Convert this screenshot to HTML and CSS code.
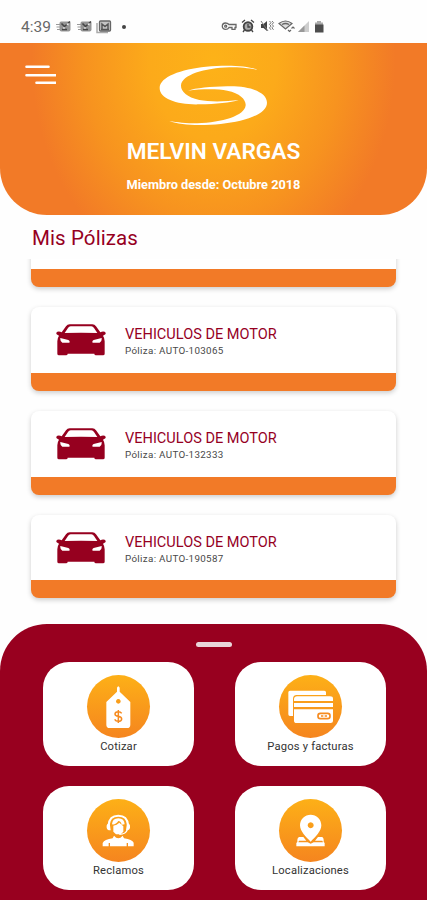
FILE: index.html
```html
<!DOCTYPE html>
<html lang="es">
<head>
<meta charset="utf-8">
<title>Mis Pólizas</title>
<link rel="stylesheet" href="styles.css">
</head>
<body>
<svg class="defs" width="0" height="0" aria-hidden="true">
  <symbol id="car" viewBox="0 0 148 96">
    <path fill-rule="evenodd" d="M40 1H108Q115 1 119 7L132 25Q138 21 145 23Q150 26 147 31Q144 34 140 35Q145 42 145 52V89Q145 94 140 94H119Q114 94 114 89H34Q34 94 29 94H8Q3 94 3 89V52Q3 42 8 35Q4 34 1 31Q-2 26 3 23Q10 21 16 25L29 7Q33 1 40 1ZM43 7Q38 7 35 12L25 27Q74 25 123 27L113 12Q110 7 105 7ZM12 42Q11 54 18 56H39Q42 51 36 48ZM136 42Q137 54 130 56H109Q106 51 112 48Z"/>
  </symbol>
  <symbol id="mail" viewBox="0 0 15 13">
    <path d="M5 1.500h8q1.500 0 1.500 2v6q0 2-2 2H5.500q-2 0-2-2v-6q0-2 1.500-2z" fill="#959595"/>
    <path d="M5.500 3.500l3 3L14 1.500M6 9.500h5" fill="none" stroke="#444" stroke-width="1.500"/>
    <path d="M0 4.500h4M.5 7h4M1 9.500h3" stroke="#999" stroke-width="1.200"/>
    <path d="M10 4l2.500-1v2.500zM7 7.500h2v1H7z" fill="#fff"/>
  </symbol>
</svg>

<div class="status">
  <div class="status-left">
    <span class="clock">4:39</span>
    <svg class="mail" width="15" height="13"><use href="#mail"/></svg>
    <svg class="mail second" width="15" height="13"><use href="#mail"/></svg>
    <svg class="news" width="16" height="14" viewBox="0 0 16 14">
      <path d="M1 3v9.500h11" fill="none" stroke="#aaa" stroke-width="1.500"/>
      <rect x="3.500" y="1" width="11" height="10" rx="1" fill="#c4c4c4" stroke="#666" stroke-width="1.300"/>
      <path d="M6 9V4l3 2.500L12 4v5M5 9.500h8" fill="none" stroke="#555" stroke-width="1.500"/>
    </svg>
    <i class="dot"></i>
  </div>
  <svg class="status-right" width="106" height="16" viewBox="0 0 106 16">
    <g fill="none" stroke="#666" stroke-width="1.300">
      <path d="M8 6.500Q6.500 5 4.500 5a3.200 3.200 0 0 0 0 6.400Q7 11.400 8 9.500h3v1.800h3V9.500h1V6.500z"/>
      <circle cx="4.700" cy="8.200" r="1"/>
    </g>
    <circle cx="27" cy="8.500" r="4.300" fill="#aaa" stroke="#444" stroke-width="1.900"/>
    <path d="M21 4.500l3-2.500M33 4.500L30 2M27 6v3h2.500M23.500 12L22 14M30.500 12l1.500 2" fill="none" stroke="#444" stroke-width="1.300"/>
    <path d="M40 6h2.500L46 3v10l-3.500-3H40z" fill="#444"/>
    <path d="M40 3l7 10M48.500 3l1.500 1.700-1.500 1.700 1.500 1.700-1.500 1.700 1.500 2M51 3l1.500 1.700L51 6.400l1.500 1.700L51 9.800l1.500 2" fill="none" stroke="#777"/>
    <path d="M58 5.500Q64.500 .500 71 5.500L64.500 11z" fill="#ddd" stroke="#666" stroke-width="1.200"/>
    <path d="M61 6.500q3.500-2 7 0" fill="none" stroke="#666" stroke-width="1.300"/>
    <path d="M67 12l1.500 1.500L70 12M70.500 10.500L72 9l1.500 1.500" fill="none" stroke="#666" stroke-width="1.200"/>
    <path d="M77 14L88 3V14z" fill="#cdcdcd"/><path d="M77 14L83.500 7.500V14z" fill="#999"/>
    <path d="M96 3h4v1.500h2V7h-8V4.500h2z" fill="#aaa"/><path d="M94 6.500h8.500v8H94z" fill="#4d4d4d"/>
  </svg>
</div>

<header class="hero">
  <svg class="menu" width="32" height="21" viewBox="0 0 32 21">
    <path d="M2.500 1.800H24.500M2.500 10.200H31.500M12.500 17.800H31.500" stroke="#fff" stroke-width="2.600" stroke-linecap="round"/>
  </svg>
  <svg class="logo" width="109" height="62" viewBox="149 40 327 186" fill="#fff">
    <path id="swoosh" d="M444 57C410 43 345 43 290 48C215 56 151 78 151 112C151 145 205 163 270 161C320 160 365 156 388 148C350 153 300 154 270 148C232 140 214 122 215 104C218 72 285 53 360 50C395 50 420 53 444 57Z"/>
    <use href="#swoosh" transform="rotate(180 312 134)"/>
  </svg>
  <h1 class="name">MELVIN VARGAS</h1>
  <p class="since">Miembro desde: Octubre 2018</p>
</header>

<main>
  <h2 class="heading">Mis Pólizas</h2>
  <div class="list">
    <article class="card"></article>
    <article class="card">
      <svg class="car" width="50" height="32"><use href="#car"/></svg>
      <div><h3>VEHICULOS DE MOTOR</h3><p>Póliza: AUTO-103065</p></div>
    </article>
    <article class="card">
      <svg class="car" width="50" height="32"><use href="#car"/></svg>
      <div><h3>VEHICULOS DE MOTOR</h3><p>Póliza: AUTO-132333</p></div>
    </article>
    <article class="card">
      <svg class="car" width="50" height="32"><use href="#car"/></svg>
      <div><h3>VEHICULOS DE MOTOR</h3><p>Póliza: AUTO-190587</p></div>
    </article>
  </div>
</main>

<section class="panel">
  <div class="handle"></div>
  <div class="tiles">
    <a class="tile">
      <svg class="icon" viewBox="0 0 189 189">
        <path fill="#fff" fill-rule="evenodd" d="M90 50V38Q94 29 98 38V50L130 81V149Q130 159 120 159H68Q58 159 58 149V81ZM94 72a7 7 0 1 0 .1 0Z"/>
        <path d="M104 115Q101 110 94 110Q84 110 84 117Q84 123 94 124Q104 126 104 132Q104 139 94 139Q86 139 83 133M94 105V144" fill="none" stroke="#f68b20" stroke-width="4.500"/>
      </svg>
      <span>Cotizar</span>
    </a>
    <a class="tile">
      <svg class="icon" viewBox="0 0 189 189">
        <path fill="#fff" d="M33 47H136Q141 47 141 52V60H53Q42 60 42 72V123H33Q28 123 28 118V52Q28 47 33 47Z"/>
        <path fill="#fff" d="M54 64H153Q162 64 162 71V78H45V72Q46 64 54 64ZM45 84H162V96H45ZM45 103H162V138Q162 144 155 144H53Q45 144 45 137Z"/>
        <rect x="117" y="115" width="36" height="16" rx="7" fill="none" stroke="#f68b20" stroke-width="5"/>
        <path d="M126 123h18" stroke="#f68b20" stroke-width="4" stroke-dasharray="7 4"/>
      </svg>
      <span>Pagos y facturas</span>
    </a>
    <a class="tile">
      <svg class="icon" viewBox="0 0 189 189">
        <path d="M65 88V78Q67 50 94 50Q121 50 123 78V88" fill="none" stroke="#fff" stroke-width="6"/>
        <path d="M68 72Q57 74 59 86Q61 95 71 94ZM120 72Q131 74 129 86Q127 95 117 94ZM75 76Q76 58 94 58Q112 58 113 76L104 77Q102 66 94 66Q86 78 75 76ZM79 80Q90 78 97 71L109 82V98L101 106H87L79 98Z" fill="#fff"/>
        <path d="M121 92Q117 106 97 106" fill="none" stroke="#fff" stroke-width="4"/>
        <path d="M81 110Q94 125 107 110L111 118Q136 122 140 131V142H123V132H119V142H69V132H65V142H47V132Q52 121 77 118Z" fill="#fff"/>
      </svg>
      <span>Reclamos</span>
    </a>
    <a class="tile">
      <svg class="icon" viewBox="0 0 189 189">
        <path d="M61 114H73L82 125H60L58 130H86L95 134L104 130H132L130 125H108L117 114H129Q135 116 134 129L137 132V142H52V132L55 129Q54 116 61 114Z" fill="#fff"/>
        <path fill="#fff" fill-rule="evenodd" d="M95 47C112 47 127 60 127 79C127 97 109 114 95 128C81 114 63 97 63 79C63 60 78 47 95 47ZM95 70a9 9 0 1 0 .1 0Z"/>
      </svg>
      <span>Localizaciones</span>
    </a>
  </div>
</section>
</body>
</html>
```
FILE: styles.css
```css
* { box-sizing: border-box; }
h1, h2, h3, p { margin: 0; font-weight: 400; }
svg { display: block; flex: none; }
body {
  margin: 0;
  width: 427px;
  height: 900px;
  overflow: hidden;
  background: #fefefe;
  font-family: Roboto, "Liberation Sans", sans-serif;
}
.defs { position: absolute; }

.status {
  height: 43px;
  display: flex;
  justify-content: space-between;
  padding: 18px 100px 0 21px;
}
.status-left { display: flex; height: 17px; align-items: center; }
.clock { width: 35px; padding-top: 1px; font-size: 15.500px; line-height: 17px; color: #686868; }
.second { margin-left: 6px; }
.news { margin-left: 4px; }
.dot { width: 4px; height: 4px; margin-left: 10px; border-radius: 50%; background: #444; }

.hero {
  position: relative;
  height: 171.500px;
  display: flex;
  flex-direction: column;
  align-items: center;
  padding-top: 21px;
  color: #fff;
  background: radial-gradient(ellipse 182px 225px at 50% 10%, #fdb218 0, #fcaa1a 35%, #f7931f 70%, #f27a27 100%);
  border-radius: 0 0 47px 47px;
}
.menu { position: absolute; left: 24px; top: 22px; }
.name { margin-top: 13px; font-size: 22.700px; line-height: 26px; font-weight: 600; white-space: nowrap; }
.since { margin-top: 13px; font-size: 12.750px; line-height: 14px; font-weight: 700; white-space: nowrap; }

.heading { height: 44.500px; padding: 10px 32px 0; font-size: 20.500px; line-height: 26px; letter-spacing: .1px; color: #96001f; }
.list {
  height: 365px;
  display: flex;
  flex-direction: column;
  justify-content: flex-end;
  gap: 20px;
  padding: 0 31px 25.700px;
  overflow: hidden;
}
.card {
  flex: none;
  height: 83.800px;
  display: flex;
  padding: 17px 0 0 25px;
  background: #fff;
  border-bottom: 18px solid #f27a27;
  border-radius: 8px;
  box-shadow: 0 2px 5px rgba(0, 0, 0, .2);
}
.car { fill: #96001f; margin-right: 19px; }
.card h3 { margin-top: 2px; font-size: 14.550px; line-height: 17px; color: #96001f; white-space: nowrap; }
.card p { margin-top: 2px; font-size: 9.800px; line-height: 11px; letter-spacing: .33px; color: #484848; white-space: nowrap; }

.panel { height: 276px; padding-top: 18px; background: #98001f; border-radius: 47px 47px 0 0; }
.handle { width: 36px; height: 5px; margin: 0 auto; border-radius: 3px; background: #ead5da; }
.tiles { display: grid; grid-template-columns: 151px 151px; gap: 20px 41px; padding: 15px 0 0 43px; }
.tile {
  height: 104px;
  display: flex;
  flex-direction: column;
  align-items: center;
  padding-top: 13px;
  background: #fff;
  border-radius: 26px;
}
.icon { width: 63px; height: 63px; border-radius: 50%; background: linear-gradient(#fdb017, #f5851f); }
.tile span { margin-top: 2px; font-size: 11.200px; line-height: 13px; letter-spacing: .18px; color: #333; white-space: nowrap; }
```
